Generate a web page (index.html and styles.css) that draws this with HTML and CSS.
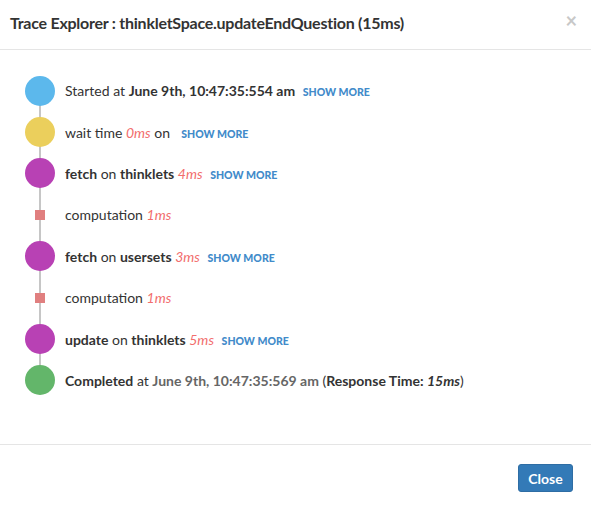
FILE: index.html
```html
<!DOCTYPE html>
<html>
<head>
<meta charset="utf-8">
<link rel="stylesheet" href="styles.css">
</head>
<body>
<div class="modal">
  <div class="header">
    <h4 class="title">Trace Explorer : thinkletSpace.updateEndQuestion (15ms)</h4>
    <span class="close">×</span>
  </div>
  <div class="body">
    <ul class="timeline">
      <li class="row"><span class="dot blue"></span><span class="text">Started at <b>June 9th, 10:47:35:554 am</b> <a class="more">SHOW MORE</a></span></li>
      <li class="row"><span class="dot yellow"></span><span class="text">wait time <i class="ms">0ms</i> on &nbsp;<a class="more">SHOW MORE</a></span></li>
      <li class="row"><span class="dot purple"></span><span class="text"><b>fetch</b> on <b>thinklets</b> <i class="ms">4ms</i> <a class="more">SHOW MORE</a></span></li>
      <li class="row"><span class="sq"></span><span class="text">computation <i class="ms">1ms</i></span></li>
      <li class="row"><span class="dot purple"></span><span class="text"><b>fetch</b> on <b>usersets</b> <i class="ms">3ms</i> <a class="more">SHOW MORE</a></span></li>
      <li class="row"><span class="sq"></span><span class="text">computation <i class="ms">1ms</i></span></li>
      <li class="row"><span class="dot purple"></span><span class="text"><b>update</b> on <b>thinklets</b> <i class="ms">5ms</i> <a class="more">SHOW MORE</a></span></li>
      <li class="row"><span class="dot green"></span><span class="text"><b>Completed</b> at <b class="gray">June 9th, 10:47:35:569 am</b> (<b>Response Time: <i>15ms</i></b>)</span></li>
    </ul>
  </div>
  <div class="footer">
    <button class="btn">Close</button>
  </div>
</div>
</body>
</html>
```
FILE: styles.css
```css
html, body {
  margin: 0;
  padding: 0;
  background: #fff;
}
body {
  font-family: "Lato", "Open Sans", sans-serif;
  color: #333;
  font-size: 14px;
}
.modal {
  width: 591px;
  height: 505px;
  box-sizing: border-box;
  display: flex;
  flex-direction: column;
}
.header {
  height: 50px;
  box-sizing: border-box;
  border-bottom: 1px solid #e5e5e5;
  display: flex;
  align-items: center;
  justify-content: space-between;
  padding: 0 14px 0 10px;
}
.title {
  margin: 0;
  font-size: 16px;
  font-weight: 700;
  color: #333;
  letter-spacing: -0.25px;
  padding-bottom: 4px;
}
.close {
  font-size: 20px;
  font-weight: 700;
  color: #c8c8c8;
  line-height: 1;
  margin-top: -10px;
}
.body {
  padding: 20px 0 0 25px;
  height: 394px;
  box-sizing: border-box;
}
.timeline {
  list-style: none;
  margin: 0;
  padding: 0;
  background-image: linear-gradient(#c6c6c6, #c6c6c6);
  background-repeat: no-repeat;
  background-size: 2px 290px;
  background-position: 14px 20px;
}
.row {
  height: 41.4px;
  display: flex;
  align-items: center;
}
.dot {
  width: 30px;
  height: 30px;
  border-radius: 50%;
  flex: none;
}
.blue { background: #5cb8ec; }
.yellow { background: #ebcf5c; }
.purple { background: #b841b4; }
.green { background: #63b66a; }
.sq {
  width: 10px;
  height: 10px;
  background: #e07f7f;
  margin: 0 10px;
  flex: none;
}
.text {
  margin-left: 10px;
  white-space: nowrap;
}
.text b { font-weight: 700; }
.gray { color: #666; }
.ms {
  color: #f26d6d;
  font-style: italic;
}
.more {
  color: #428bca;
  font-weight: 900;
  font-size: 10.5px;
  margin-left: 4px;
}
.footer {
  border-top: 1px solid #e5e5e5;
  display: flex;
  justify-content: flex-end;
  padding: 19px 18px 0 0;
}
.btn {
  background: #337ab7;
  border: 1px solid #2e6da4;
  color: #fff;
  font-family: "Lato", sans-serif;
  font-weight: 700;
  font-size: 14px;
  width: 55px;
  height: 28px;
  border-radius: 3px;
  padding: 0;
}
```
